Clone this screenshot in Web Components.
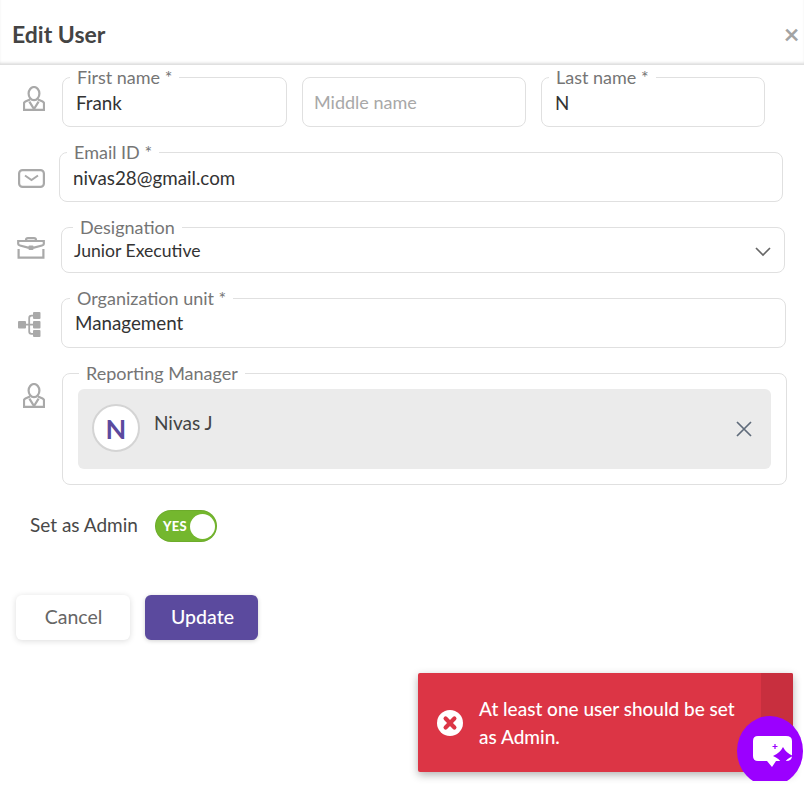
<!DOCTYPE html>
<html>
<head>
<meta charset="utf-8">
<title>Edit User</title>
<style>
html, body { margin: 0; padding: 0; background: #fff; }
body { font-family: Lato, "Liberation Sans", sans-serif; width: 804px; height: 808px; overflow: hidden; position: relative; }
</style>
</head>
<body>
<edit-user-dialog>
  <dialog-header>Edit User</dialog-header>

  <form-row style="margin-top:12px" icon="person" icon-left="23" icon-top="9">
    <div style="display:flex;gap:15px;margin-left:62px;width:703px">
      <outlined-field label="First name *" value="Frank" style="flex:0 0 225px"></outlined-field>
      <outlined-field placeholder="Middle name" style="flex:1" inset="11"></outlined-field>
      <outlined-field label="Last name *" value="N" style="flex:1"></outlined-field>
    </div>
  </form-row>

  <form-row style="margin-top:25px" icon="mail" icon-left="18" icon-top="17">
    <outlined-field label="Email ID *" value="nivas28@gmail.com" style="margin-left:59px;width:724px" inset="13"></outlined-field>
  </form-row>

  <form-row style="margin-top:25px" icon="case" icon-left="17" icon-top="10">
    <outlined-field label="Designation" value="Junior Executive" select style="margin-left:61px;width:724px;height:46px" inset="12" label-left="19" small></outlined-field>
  </form-row>

  <form-row style="margin-top:25px" icon="tree" icon-left="18" icon-top="14">
    <outlined-field label="Organization unit *" value="Management" style="margin-left:61px;width:725px;--nudge:-2px" inset="13" label-left="16"></outlined-field>
  </form-row>

  <form-row style="margin-top:25px" icon="person" icon-left="23" icon-top="10">
    <manager-field label="Reporting Manager" initial="N" name="Nivas J" style="margin-left:62px;width:725px"></manager-field>
  </form-row>

  <admin-toggle label="Set as Admin" state="YES"></admin-toggle>

  <form-actions>
    <action-button>Cancel</action-button>
    <action-button primary>Update</action-button>
  </form-actions>
</edit-user-dialog>

<error-toast>At least one user should be set as Admin.</error-toast>
<chat-launcher></chat-launcher>

<script>
const icons = {
  person: `<svg width="22" height="25" viewBox="0 0 22 25" fill="none" stroke="#a9a9a9" stroke-width="2.2">
    <ellipse cx="11" cy="7.6" rx="5.4" ry="6.6"/>
    <path d="M7 13.4 L2.4 15.4 Q1 16 1 17.5 V23.8 H21 V17.5 Q21 16 19.6 15.4 L15 13.4"/>
    <path d="M6.4 15.6 L11 23 L15.6 15.6"/>
  </svg>`,
  mail: `<svg width="27" height="19" viewBox="0 0 27 19" fill="none" stroke="#a9a9a9">
    <rect x="1.1" y="1.1" width="24.8" height="16.8" rx="3.5" stroke-width="2.2"/>
    <path d="M7 6.5 L13.5 11 L20 6.5" stroke-width="2"/>
  </svg>`,
  case: `<svg width="28" height="22" viewBox="0 0 28 22" fill="none" stroke="#a9a9a9" stroke-width="2.2">
    <path d="M9 4 V3 Q9 1.2 11 1.2 H17 Q19 1.2 19 3 V4"/>
    <path d="M1.2 4 H26.8 V7 Q26.8 8 25 8.5 L17 10.6 H11 L3 8.5 Q1.2 8 1.2 7 Z"/>
    <path d="M1.6 12 V20.6 H26.4 V12"/>
    <rect x="11.5" y="8.6" width="5" height="4.4" rx="1" fill="#a9a9a9" stroke="none"/>
  </svg>`,
  tree: `<svg width="23" height="25" viewBox="0 0 23 25" fill="none">
    <g fill="#a9a9a9">
      <rect x="0" y="9" width="8" height="7.5" rx="1"/>
      <rect x="15" y="0" width="7.5" height="7" rx="1"/>
      <rect x="15" y="9" width="7.5" height="7.5" rx="1"/>
      <rect x="15" y="18" width="7.5" height="7" rx="1"/>
    </g>
    <path d="M8 12.7 H15 M15 3.6 H13.5 Q11.2 3.6 11.2 6 V19.5 Q11.2 21.8 13.5 21.8 H15" stroke="#a9a9a9" stroke-width="1.8"/>
  </svg>`
};

const dialogTemplate = document.createElement('template');
dialogTemplate.innerHTML = `
<style>
  :host { display: block; width: 804px; }
</style>
<slot></slot>`;

class EditUserDialog extends HTMLElement {
  constructor() {
    super();
    this.attachShadow({mode: "open"});
    this.shadowRoot.appendChild(dialogTemplate.content.cloneNode(true));
  }
}
customElements.define('edit-user-dialog', EditUserDialog);

const headerTemplate = document.createElement('template');
headerTemplate.innerHTML = `
<style>
  :host {
    display: flex; align-items: center; justify-content: space-between;
    height: 65px; padding: 2px 4px 0 12px; box-sizing: border-box;
    box-shadow: inset 0 -3px 3px -1px rgba(0,0,0,.14); background: #fff;
  }
  h1 { margin: 0; font: 700 23px Lato, sans-serif; color: #444; }
  .close { color: #a3a3a3; font: 700 27px Lato, sans-serif; line-height: 1; width: 17px; text-align: center; }
</style>
<h1><slot></slot></h1>
<span class="close">&times;</span>`;

class DialogHeader extends HTMLElement {
  constructor() {
    super();
    this.attachShadow({mode: "open"});
    this.shadowRoot.appendChild(headerTemplate.content.cloneNode(true));
  }
}
customElements.define('dialog-header', DialogHeader);

const rowTemplate = document.createElement('template');
rowTemplate.innerHTML = `
<style>
  :host { display: block; position: relative; }
  .icon { position: absolute; line-height: 0; }
</style>
<div class="icon"></div>
<slot></slot>`;

class FormRow extends HTMLElement {
  constructor() {
    super();
    this.attachShadow({mode: "open"});
    this.shadowRoot.appendChild(rowTemplate.content.cloneNode(true));
  }

  connectedCallback() {
    let icon = this.shadowRoot.querySelector(".icon");
    icon.innerHTML = icons[this.getAttribute('icon')];
    icon.style.left = this.getAttribute('icon-left') + "px";
    icon.style.top = this.getAttribute('icon-top') + "px";
  }
}
customElements.define('form-row', FormRow);

const fieldTemplate = document.createElement('template');
fieldTemplate.innerHTML = `
<style>
  :host { display: block; height: 50px; position: relative; }
  fieldset {
    box-sizing: border-box; height: 100%; margin: 0; padding: 0 40px 0 var(--inset, 13px);
    border: 1px solid #e0e0e0; border-radius: 8px; min-width: 0;
    display: flex; align-items: center;
  }
  legend {
    margin-left: calc(var(--legend, 15px) - var(--inset, 13px) - 8px);
    padding: 0 7px; height: 0; line-height: 0; transform: translateY(-1px);
    font-size: 18px; color: #757575; white-space: nowrap;
  }
  legend:empty { display: none; }
  .value { font-size: 18.8px; color: #333; white-space: nowrap; margin-top: var(--nudge, 0); }
  .value.placeholder { color: #a8a8a8; font-size: 18px; }
  :host([small]) .value { font-size: 17.6px; }
  .chevron { position: absolute; right: 14px; top: 20px; display: none; }
  :host([select]) .chevron { display: block; }
</style>
<fieldset><legend></legend><span class="value"></span></fieldset>
<svg class="chevron" width="16" height="10" viewBox="0 0 16 10" fill="none" stroke="#666" stroke-width="1.7"><path d="M1 1 L8 8 L15 1"/></svg>`;

class OutlinedField extends HTMLElement {
  constructor() {
    super();
    this.attachShadow({mode: "open"});
    this.shadowRoot.appendChild(fieldTemplate.content.cloneNode(true));
  }

  connectedCallback() {
    let legend = this.shadowRoot.querySelector("legend");
    let value = this.shadowRoot.querySelector(".value");
    legend.textContent = this.getAttribute('label') || "";
    if (this.hasAttribute('placeholder')) {
      value.textContent = this.getAttribute('placeholder');
      value.classList.add("placeholder");
    } else {
      value.textContent = this.getAttribute('value');
    }
    if (this.hasAttribute('inset')) this.style.setProperty('--inset', this.getAttribute('inset') + "px");
    if (this.hasAttribute('label-left')) this.style.setProperty('--legend', this.getAttribute('label-left') + "px");
  }
}
customElements.define('outlined-field', OutlinedField);

const managerTemplate = document.createElement('template');
managerTemplate.innerHTML = `
<style>
  :host { display: block; }
  fieldset {
    box-sizing: border-box; height: 112px; margin: 0; padding: 15px;
    border: 1px solid #e0e0e0; border-radius: 8px; min-width: 0;
  }
  legend { margin: 0 0 0 1px; padding: 0 7px; height: 0; line-height: 0; transform: translateY(-1px); font-size: 18px; color: #757575; white-space: nowrap; }
  .chip {
    height: 80px; background: #ebebeb; border-radius: 6px; box-sizing: border-box;
    display: flex; align-items: flex-start; padding: 15px 14px; gap: 14px;
  }
  .avatar {
    width: 48px; height: 48px; box-sizing: border-box; border-radius: 50%;
    border: 2px solid #d4d4d4; background: #fff; color: #5b4a9e;
    display: flex; align-items: center; justify-content: center;
    font-size: 27px; font-weight: 700;
  }
  .name { font-size: 19px; color: #444; flex: 1; line-height: 22px; margin-top: 8px; }
  svg { margin: 16px 4px 0 0; }
</style>
<fieldset>
  <legend></legend>
  <div class="chip">
    <div class="avatar"></div>
    <div class="name"></div>
    <svg width="18" height="18" viewBox="0 0 18 18" fill="none" stroke="#5f6b7a" stroke-width="1.7"><path d="M2 2 L16 16 M16 2 L2 16"/></svg>
  </div>
</fieldset>`;

class ManagerField extends HTMLElement {
  constructor() {
    super();
    this.attachShadow({mode: "open"});
    this.shadowRoot.appendChild(managerTemplate.content.cloneNode(true));
  }

  connectedCallback() {
    this.shadowRoot.querySelector("legend").textContent = this.getAttribute('label');
    this.shadowRoot.querySelector(".avatar").textContent = this.getAttribute('initial');
    this.shadowRoot.querySelector(".name").textContent = this.getAttribute('name');
  }
}
customElements.define('manager-field', ManagerField);

const toggleTemplate = document.createElement('template');
toggleTemplate.innerHTML = `
<style>
  :host { display: flex; align-items: center; gap: 17px; margin: 25px 0 0 30px; height: 32px; }
  .label { font-size: 19px; color: #484848; margin-top: -3px; }
  .track {
    width: 62px; height: 32px; box-sizing: border-box; border-radius: 16px; background: #74b72e;
    display: flex; align-items: center; justify-content: space-between; padding: 0 2px 0 8px;
    box-shadow: inset 0 0 0 1px rgba(0,0,0,.06);
  }
  .state { font-size: 13px; font-weight: 900; color: #fff; letter-spacing: .3px; }
  .knob { width: 25px; height: 25px; border-radius: 50%; background: #fff; }
</style>
<span class="label"></span>
<div class="track"><span class="state"></span><span class="knob"></span></div>`;

class AdminToggle extends HTMLElement {
  constructor() {
    super();
    this.attachShadow({mode: "open"});
    this.shadowRoot.appendChild(toggleTemplate.content.cloneNode(true));
  }

  connectedCallback() {
    this.shadowRoot.querySelector(".label").textContent = this.getAttribute('label');
    this.shadowRoot.querySelector(".state").textContent = this.getAttribute('state');
  }
}
customElements.define('admin-toggle', AdminToggle);

const actionsTemplate = document.createElement('template');
actionsTemplate.innerHTML = `
<style>
  :host { display: flex; gap: 15px; margin: 53px 0 0 16px; }
</style>
<slot></slot>`;

class FormActions extends HTMLElement {
  constructor() {
    super();
    this.attachShadow({mode: "open"});
    this.shadowRoot.appendChild(actionsTemplate.content.cloneNode(true));
  }
}
customElements.define('form-actions', FormActions);

const buttonTemplate = document.createElement('template');
buttonTemplate.innerHTML = `
<style>
  :host {
    display: flex; align-items: center; justify-content: center;
    width: 114px; height: 45px; padding: 0 0 2px 1px; box-sizing: border-box; border-radius: 6px; background: #fff; color: #666;
    font-size: 19.5px; box-shadow: 0 1px 6px rgba(0,0,0,.14);
  }
  :host([primary]) { width: 113px; padding-left: 2px; background: #5b4a9e; color: #fff; font-weight: 500; box-shadow: 0 1px 4px rgba(0,0,0,.18); }
</style>
<slot></slot>`;

class ActionButton extends HTMLElement {
  constructor() {
    super();
    this.attachShadow({mode: "open"});
    this.shadowRoot.appendChild(buttonTemplate.content.cloneNode(true));
  }
}
customElements.define('action-button', ActionButton);

const toastTemplate = document.createElement('template');
toastTemplate.innerHTML = `
<style>
  :host {
    position: absolute; left: 418px; top: 673px; width: 375px; height: 99px;
    background: #dc3545; border-radius: 2px; color: #fff;
    box-shadow: 0 3px 8px rgba(0,0,0,.3); display: flex; align-items: center; overflow: hidden;
  }
  svg { margin-left: 19px; flex: none; }
  .text { margin-left: 16px; width: 270px; font-size: 19px; line-height: 28px; font-weight: 500; }
  .side { position: absolute; right: 0; top: 0; width: 32px; height: 100%; background: #c82f3e; }
</style>
<svg width="26" height="26" viewBox="0 0 26 26">
  <circle cx="13" cy="13" r="13" fill="#fff"/>
  <path d="M8.6 8.6 L17.4 17.4 M17.4 8.6 L8.6 17.4" stroke="#dc3545" stroke-width="4.2" stroke-linecap="round"/>
</svg>
<div class="text"><slot></slot></div>
<div class="side"></div>`;

class ErrorToast extends HTMLElement {
  constructor() {
    super();
    this.attachShadow({mode: "open"});
    this.shadowRoot.appendChild(toastTemplate.content.cloneNode(true));
  }
}
customElements.define('error-toast', ErrorToast);

const chatTemplate = document.createElement('template');
chatTemplate.innerHTML = `
<style>
  :host {
    position: absolute; left: 737px; top: 716px; width: 67px; height: 65px; overflow: hidden; display: block;
  }
  .disc { position: absolute; left: 0; top: 0; width: 66px; height: 70px; border-radius: 50%; background: #9b00ff; }
  svg { position: absolute; left: 15px; top: 19px; }
</style>
<div class="disc"></div>
<svg width="41" height="33" viewBox="0 0 41 33">
  <path d="M6 1 H34 Q40 1 40 6 V21 Q40 26 34 26 H24 L20 32 L15 26 H6 Q1 26 1 21 V6 Q1 1 6 1 Z" fill="#fff"/>
  <path d="M31 12 Q34 18 41 21 Q34 24 31 30 Q28 24 21 21 Q28 18 31 12 Z" fill="#9b00ff"/>
  <path d="M23 9 v5 M20.5 11.5 h5" stroke="#9b00ff" stroke-width="1.2"/>
</svg>`;

class ChatLauncher extends HTMLElement {
  constructor() {
    super();
    this.attachShadow({mode: "open"});
    this.shadowRoot.appendChild(chatTemplate.content.cloneNode(true));
  }
}
customElements.define('chat-launcher', ChatLauncher);
</script>
</body>
</html>
